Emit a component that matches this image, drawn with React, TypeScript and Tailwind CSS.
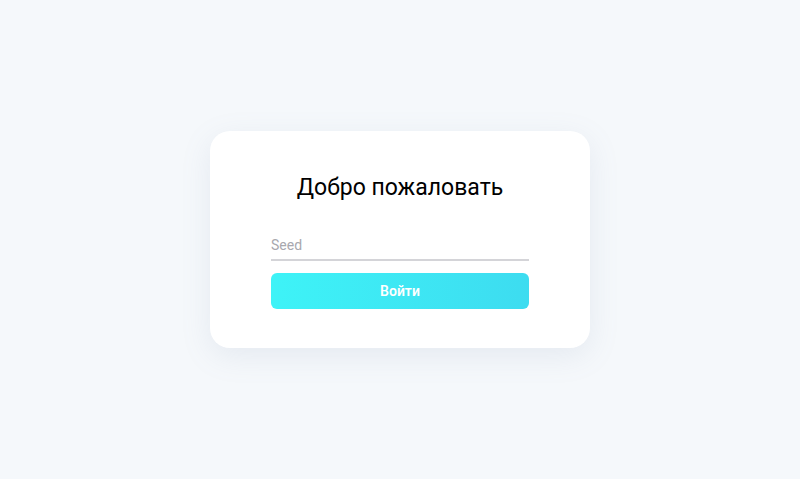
export default function App() {
  return (
    <div
      className="min-h-screen w-full bg-[#f5f8fb] flex items-center justify-center"
      style={{ fontFamily: "Roboto, 'Noto Sans', sans-serif" }}
    >
      <div className="w-[380px] bg-white rounded-[20px] shadow-[0_8px_30px_rgba(120,140,170,0.13)] px-[61px] pt-[41px] pb-[39px] flex flex-col">
        <h1 className="text-[23px] leading-8 text-black text-center font-normal">
          Добро пожаловать
        </h1>
        <input
          placeholder="Seed"
          className="mt-[25px] h-8 w-full pt-[2px] border-b-2 border-[#d4d4d8] text-[14px] text-gray-700 placeholder:text-[#a8a8ae] outline-none bg-transparent"
        />
        <button className="mt-3 h-9 w-full rounded-md bg-gradient-to-r from-[#3ef3f7] to-[#3ddcf0] text-white text-[14px] font-semibold">
          Войти
        </button>
      </div>
    </div>
  );
}
